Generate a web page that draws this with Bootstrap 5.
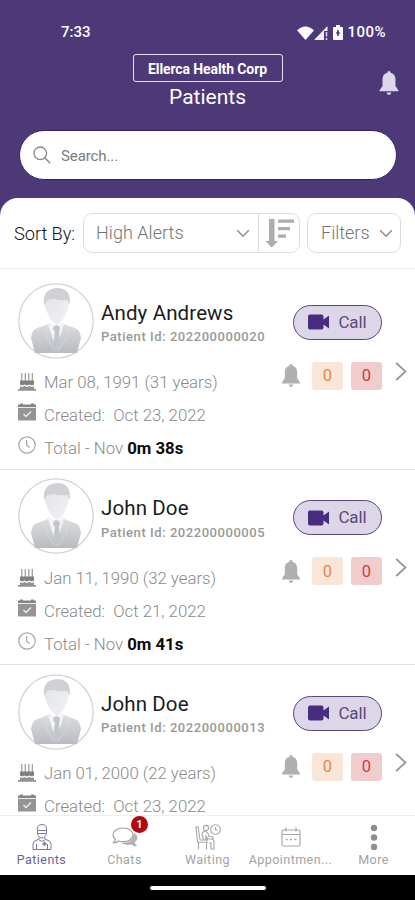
<!DOCTYPE html>
<html lang="en">
<head>
<meta charset="utf-8">
<meta name="viewport" content="width=device-width, initial-scale=1">
<title>Patients</title>
<link href="https://cdn.jsdelivr.net/npm/bootstrap@5.3.0/dist/css/bootstrap.min.css" rel="stylesheet">
<style>
  body { font-family: Roboto, "Liberation Sans", sans-serif; line-height: 1; color: #222; }
  .phone { width: 415px; height: 900px; background: #4d3978; white-space: nowrap; }
  .phone svg { display: block; flex: none; }
  .status { height: 54px; padding: 11px 29px 0 61px; font-size: 15px; font-weight: 500; }
  .battery-text { letter-spacing: .5px; }
  .title-area { height: 76px; }
  .org { width: 150px; height: 28px; border: 1.5px solid #e6e0f2; border-radius: 3px; font-size: 14px; font-weight: 700; letter-spacing: -.1px; padding-top: 2px; }
  .page-title { font-size: 21px; font-weight: 400; letter-spacing: 0; margin-top: 3px; }
  .head-bell { right: 16px; top: 17px; color: #ddd7ec; }
  .search { height: 50px; margin: 0 18px 0 19px; padding-left: 13px; border: 1px solid #39206c; font-size: 15px; color: #7c7c7c; }
  .search span { margin: 2px 0 0 10px; letter-spacing: -.1px; }
  .sheet { margin-top: 18px; border-radius: 18px 18px 0 0; min-height: 0; }
  .sortbar { height: 71px; padding: 0 14px; border-bottom: 1px solid #ededed; }
  .sort-label { width: 69px; padding-top: 2px; font-size: 18.3px; letter-spacing: -.1px; font-weight: 300; color: #111; }
  .box { height: 40px; border: 1px solid #dedede; border-radius: 9px; font-size: 18px; color: #747474; font-weight: 300; }
  .box-sort { width: 217px; }
  .box-main { width: 175px; padding: 0 8px 0 12px; border-right: 1px solid #dedede; letter-spacing: .05px; }
  .box-filter { width: 94px; margin-left: 7px; padding: 0 7px 0 13px; }
  .patient-list { padding-top: 5px; }
  .patient { height: 195.5px; padding: 8.5px 8px 0 18px; border-bottom: 1.5px solid #e2e2e2; }
  .patient-name { font-size: 20.5px; letter-spacing: .12px; color: #1c1c1c; }
  .patient-id { font-size: 13px; font-weight: 500; color: #999; letter-spacing: .55px; margin-top: 7px; }
  .who { height: 76px; }
  .who-text { padding: 5px 0 0 7px; }
  .facts { margin-top: 7px; color: #8a8a8a; font-size: 16.8px; font-weight: 300; }
  .facts li { height: 33px; }
  .facts li span { padding-top: 1px; }
  .facts svg { margin-right: 8px; }
  .facts .raised { margin-bottom: 6px; }
  .facts b { color: #0c0c0c; font-weight: 700; }
  .actions { width: 125px; padding-top: 22px; }
  .call { width: 89px; height: 35px; margin-left: 11px; padding: 0; gap: 8px; background: #dcd6e8; border: 1px solid #594780; color: #594a78; font-size: 17px; line-height: 1; letter-spacing: -.1px; }
  .counts { margin-top: 22px; height: 28px; }
  .count { width: 31px; height: 28px; padding-top: 2px; border-radius: 3px; font-size: 16.5px; }
  .count-warm { background: #f9e6d7; color: #e3864a; margin-left: 12px; }
  .count-alert { background: #f0cccd; color: #cf3b45; margin-left: 8px; }
  .tabs { height: 60px; border-top: 1px solid #eeeeee; color: #a3a3a3; font-size: 12.5px; letter-spacing: .45px; }
  .tab { width: 83px; height: 59px; padding-top: 6px; }
  .tab .glyph { height: 32px; padding-bottom: 2px; }
  .tab-on { color: #71628f; }
  .unread { width: 17px; height: 17px; left: 48px; top: 0; background: #ad0a12; font-size: 11px; font-weight: 700; letter-spacing: 0; }
  .homebar { height: 25px; }
  .homebar span { width: 116px; height: 4px; }
</style>
</head>
<body>
<svg width="0" height="0" class="position-absolute" aria-hidden="true">
  <defs>
    <linearGradient id="suit" x1="0" y1="0" x2="0" y2="1"><stop offset="0" stop-color="#dcdde0"/><stop offset="1" stop-color="#b9bbc0"/></linearGradient>
    <linearGradient id="face" x1="0" y1="0" x2="1" y2="1"><stop offset="0" stop-color="#e2e4ea"/><stop offset="1" stop-color="#f1f1f5"/></linearGradient>
    <symbol id="avatar" viewBox="0 0 76 76">
      <circle cx="38" cy="38" r="37.2" fill="#fff" stroke="#d3d3d3" stroke-width="1.300"/>
      <path d="M31 39 38 44 45 39 49 44 46 69H30L27 44Z" fill="#f2f3f5"/>
      <path d="M27 14q11-8 23 0 2 6-1 14-4 11-10 14-6-3-10-13-4-9-2-15Z" fill="url(#face)"/>
      <path d="M26 22q-2-16 13-17 15 0 12.500 17l-2-5q-8 1-13-1-6 0-8 2Z" fill="#cfd1d5"/>
      <path d="M30 41 17 46q-3 2-4 9l4 15h42l4-15q-1-7-4-9L46 41l-8 25Z" fill="url(#suit)"/>
      <path d="m36 43 2-1 3 1 1 3-1 3 1 13-3 7-4-7 2-13-2-3Z" fill="#c3c5cc"/>
      <path d="m30 42-4 6 3 3-1 3 9 14m10-26 4 6-3 3 1 3-9 14" fill="none" stroke="#dfe0e3" stroke-width=".6"/>
    </symbol>
    <symbol id="bell" viewBox="0 0 18 23">
      <path fill="currentColor" d="M9 0c1 0 1.500.7 1.500 1.700C14 2.500 15.200 5.200 15.200 8.500v5.800l2.800 4.200v1H0v-1l2.800-4.200V8.500c0-3.300 1.200-6 4.700-6.800C7.500.7 8 0 9 0ZM6.800 20.500h4.400C11 22 10.200 22.800 9 22.800S7 22 6.800 20.500Z"/>
    </symbol>
    <symbol id="down" viewBox="0 0 14 9"><path d="m1.200 1.200 5.800 6 5.800-6" fill="none" stroke="#8c8c8c" stroke-width="1.500"/></symbol>
    <symbol id="cake" viewBox="0 0 18 18">
      <path d="M3.800 0v8M7.300 0v8M10.800 0v8M14.300 0v8" stroke="#a0a0a0" stroke-width="1.300"/>
      <path d="M2 7.500h14v4l-2 1-2.500-1-2.500 1-2.500-1-2.500 1-2-1Z" fill="#7f7f7f"/>
      <path d="M2 13.200l2 .8 2.500-1 2.500 1 2.500-1 2.500 1 2-.8V16h2v1.700H0V16H2Z" fill="#929292"/>
    </symbol>
    <symbol id="cal" viewBox="0 0 18 18">
      <path d="M0 1.500h2V.5h3v1h8v-1h3v1h2V4H0Z" fill="#858585"/><path d="M0 4.800h18V17.500H0Z" fill="#949494"/>
      <path d="m5.500 11 2.500 2.400L13 8.500" fill="none" stroke="#eee" stroke-width="1.400"/>
    </symbol>
    <symbol id="clock" viewBox="0 0 18 18"><circle cx="9" cy="9" r="8.200" fill="none" stroke="#a5a5a5" stroke-width="1.200"/><path d="M8.700 4v5.500l3 2" fill="none" stroke="#a5a5a5" stroke-width="1.200"/></symbol>
    <symbol id="video" viewBox="0 0 22 16"><path d="M2 .5h11.500a2 2 0 0 1 2 2v3L21 1.500v13l-5.500-4v3a2 2 0 0 1-2 2H2a2 2 0 0 1-2-2v-11a2 2 0 0 1 2-2Z" fill="#472c80"/></symbol>
    <symbol id="next" viewBox="0 0 12 19"><path d="m1.200 1 9.300 8.500-9.300 8.500" fill="none" stroke="#969696" stroke-width="1.700"/></symbol>
  </defs>
</svg>

<div class="phone d-flex flex-column overflow-hidden">
  <header class="text-white">
    <div class="status d-flex align-items-center justify-content-between">
      <span>7:33</span>
      <div class="d-flex align-items-center">
        <svg width="17" height="14" viewBox="0 0 17 14"><path d="M0 4.200Q8.500-3.400 17 4.200L8.500 14Z" fill="#fff"/></svg>
        <svg width="15" height="14" viewBox="0 0 15 14"><path d="M0 14 13.500 0v5H10v9Z" fill="#f1edf9"/><path d="M12.500 6v4.500m0 1.500v2" stroke="#ddd6ec" stroke-width="1.500"/></svg>
        <svg class="ms-1 me-1" width="10" height="15" viewBox="0 0 10 15"><path d="M1 2h2V0h4v2h2q1 0 1 1v11q0 1-1 1H1q-1 0-1-1V3q0-1 1-1Z" fill="#fff"/><path d="M5 5v6M3.200 8h3.600" stroke="#4d3978" stroke-width="1.600"/></svg>
        <span class="battery-text">100%</span>
      </div>
    </div>
    <div class="title-area position-relative d-flex flex-column align-items-center">
      <div class="org d-flex align-items-center justify-content-center">Ellerca Health Corp</div>
      <h1 class="page-title mb-0">Patients</h1>
      <svg class="head-bell position-absolute" width="20" height="24"><use href="#bell"/></svg>
    </div>
    <div class="search rounded-pill bg-white d-flex align-items-center">
      <svg width="18" height="18" viewBox="0 0 18 18"><circle cx="7.300" cy="7.300" r="6.300" fill="none" stroke="#8a8a8a" stroke-width="1.300"/><path d="m11.800 11.800 5.400 5.400" stroke="#8a8a8a" stroke-width="1.500"/></svg>
      <span>Search...</span>
    </div>
  </header>

  <main class="sheet bg-white flex-grow-1 overflow-hidden">
    <div class="sortbar d-flex align-items-center">
      <div class="sort-label">Sort By:</div>
      <div class="box box-sort d-flex align-items-stretch">
        <div class="box-main d-flex align-items-center justify-content-between">High Alerts <svg width="14" height="9"><use href="#down"/></svg></div>
        <div class="flex-grow-1 d-flex align-items-center justify-content-center">
          <svg width="29" height="30" viewBox="0 0 29 30" fill="#adadad"><path d="M4 1h5.500v22H13l-6.200 6.500L.5 23H4ZM13 1.500h16v3.300H13Zm0 7.500h12v3.300H13Zm0 7.500h8v3.300h-8Z"/></svg>
        </div>
      </div>
      <div class="box box-filter d-flex align-items-center justify-content-between">Filters <svg width="14" height="9"><use href="#down"/></svg></div>
    </div>

    <div class="patient-list">
    <article class="patient d-flex justify-content-between">
      <div>
        <div class="who d-flex align-items-center">
          <svg width="76" height="76"><use href="#avatar"/></svg>
          <div class="who-text"><div class="patient-name">Andy Andrews</div><div class="patient-id">Patient Id: 202200000020</div></div>
        </div>
        <ul class="facts list-unstyled mb-0">
          <li class="d-flex align-items-center"><svg width="18" height="18"><use href="#cake"/></svg><span>Mar 08, 1991 (31 years)</span></li>
          <li class="d-flex align-items-center"><svg class="raised" width="18" height="18"><use href="#cal"/></svg><span>Created:&nbsp; Oct 23, 2022</span></li>
          <li class="d-flex align-items-center"><svg class="raised" width="18" height="18"><use href="#clock"/></svg><span>Total - Nov <b>0m 38s</b></span></li>
        </ul>
      </div>
      <div class="actions">
        <button type="button" class="btn call rounded-pill d-flex align-items-center justify-content-center"><svg width="22" height="16"><use href="#video"/></svg>Call</button>
        <div class="counts d-flex align-items-center">
          <svg width="18" height="23" color="#b0b0b0"><use href="#bell"/></svg>
          <span class="count count-warm d-flex align-items-center justify-content-center">0</span>
          <span class="count count-alert d-flex align-items-center justify-content-center">0</span>
          <svg class="ms-auto mb-2" width="12" height="19"><use href="#next"/></svg>
        </div>
      </div>
    </article>

    <article class="patient d-flex justify-content-between">
      <div>
        <div class="who d-flex align-items-center">
          <svg width="76" height="76"><use href="#avatar"/></svg>
          <div class="who-text"><div class="patient-name">John Doe</div><div class="patient-id">Patient Id: 202200000005</div></div>
        </div>
        <ul class="facts list-unstyled mb-0">
          <li class="d-flex align-items-center"><svg width="18" height="18"><use href="#cake"/></svg><span>Jan 11, 1990 (32 years)</span></li>
          <li class="d-flex align-items-center"><svg class="raised" width="18" height="18"><use href="#cal"/></svg><span>Created:&nbsp; Oct 21, 2022</span></li>
          <li class="d-flex align-items-center"><svg class="raised" width="18" height="18"><use href="#clock"/></svg><span>Total - Nov <b>0m 41s</b></span></li>
        </ul>
      </div>
      <div class="actions">
        <button type="button" class="btn call rounded-pill d-flex align-items-center justify-content-center"><svg width="22" height="16"><use href="#video"/></svg>Call</button>
        <div class="counts d-flex align-items-center">
          <svg width="18" height="23" color="#b0b0b0"><use href="#bell"/></svg>
          <span class="count count-warm d-flex align-items-center justify-content-center">0</span>
          <span class="count count-alert d-flex align-items-center justify-content-center">0</span>
          <svg class="ms-auto mb-2" width="12" height="19"><use href="#next"/></svg>
        </div>
      </div>
    </article>

    <article class="patient d-flex justify-content-between">
      <div>
        <div class="who d-flex align-items-center">
          <svg width="76" height="76"><use href="#avatar"/></svg>
          <div class="who-text"><div class="patient-name">John Doe</div><div class="patient-id">Patient Id: 202200000013</div></div>
        </div>
        <ul class="facts list-unstyled mb-0">
          <li class="d-flex align-items-center"><svg width="18" height="18"><use href="#cake"/></svg><span>Jan 01, 2000 (22 years)</span></li>
          <li class="d-flex align-items-center"><svg class="raised" width="18" height="18"><use href="#cal"/></svg><span>Created:&nbsp; Oct 23, 2022</span></li>
        </ul>
      </div>
      <div class="actions">
        <button type="button" class="btn call rounded-pill d-flex align-items-center justify-content-center"><svg width="22" height="16"><use href="#video"/></svg>Call</button>
        <div class="counts d-flex align-items-center">
          <svg width="18" height="23" color="#b0b0b0"><use href="#bell"/></svg>
          <span class="count count-warm d-flex align-items-center justify-content-center">0</span>
          <span class="count count-alert d-flex align-items-center justify-content-center">0</span>
          <svg class="ms-auto mb-2" width="12" height="19"><use href="#next"/></svg>
        </div>
      </div>
    </article>
    </div>
  </main>

  <nav class="tabs bg-white d-flex flex-shrink-0">
    <div class="tab tab-on d-flex flex-column align-items-center">
      <div class="glyph d-flex align-items-center"><svg width="20" height="28" viewBox="0 0 20 28" fill="none" stroke="#8376a0"><path d="M5.500 6q0-4.500 4.500-4.500T14.500 6v1.500h-9ZM5.500 7.500v3q1 4.500 4.500 4.500t4.500-4.500v-3M6 10.500h8M7.500 14.500q0 2-2.500 2.500-4 .7-4 4v5.500h18V21q0-3.300-4-4-2.500-.5-2.500-2.500M7 16.800l3 1.700 3-1.700M4.500 21v5.500m11-5.500v5.500"/><path d="M12.500 18.800v4M10.500 20.800h4" stroke-width="1.700"/></svg></div>
      <span>Patients</span>
    </div>
    <div class="tab position-relative d-flex flex-column align-items-center">
      <div class="glyph d-flex align-items-center"><svg width="26" height="21" viewBox="0 0 26 21" fill="none" stroke="#a0a0a0" stroke-width="1.200"><path d="M11 1C5 1 1 4 1 8q0 2.500 2.500 4.500-.3 2-2 3.200 3 .3 5-1.700 2 .7 4.500.7c6 0 10-3 10-6.700S17 1 11 1Z"/><path d="M22.300 6.500q2.800 2 2.500 4.800-.3 2.400-2.500 3.900.3 2.300 2.200 3.800-3 0-5.200-2-4.500 1.200-8.800-.7 11.500 0 11.800-9.800Z" fill="#b5b5b5" stroke-width=".8"/></svg></div>
      <span>Chats</span>
      <span class="unread position-absolute rounded-circle text-white d-flex align-items-center justify-content-center">1</span>
    </div>
    <div class="tab d-flex flex-column align-items-center">
      <div class="glyph d-flex align-items-center"><svg width="26" height="26" viewBox="0 0 26 26" fill="none" stroke="#a6a6a6" stroke-width="1.100"><circle cx="20.500" cy="5.500" r="4.800"/><path d="M20.500 3v3h2"/><circle cx="11" cy="4" r="2.600"/><path d="M1 3h2.200L5 16h7v2.200H2.500ZM3.500 18v7.500M11.500 18v7.500M7.500 8q4-1.500 5.500 1.500l1 3 4 .5v2h-5l-2-3v3h5q3 0 3 3V25h-3v-6h-2M7.500 8 7 10l1.500 5.500"/></svg></div>
      <span>Waiting</span>
    </div>
    <div class="tab d-flex flex-column align-items-center">
      <div class="glyph d-flex align-items-center"><svg width="20" height="20" viewBox="0 0 20 20" fill="none" stroke="#a8a8a8" stroke-width="1.200"><path d="M2.500 3h15Q19 3 19 4.500v13q0 1.500-1.500 1.500h-15Q1 19 1 17.500v-13Q1 3 2.500 3ZM1 7.500h18M5 .5v4M15 .5v4"/><path d="M4.500 12.500h2.200m2.200 0h2.200m2.200 0h2.200" stroke-width="1.600"/></svg></div>
      <span>Appointmen...</span>
    </div>
    <div class="tab d-flex flex-column align-items-center">
      <div class="glyph d-flex align-items-center"><svg width="8" height="27" viewBox="0 0 8 27" fill="#8e8e8e"><circle cx="4" cy="4" r="3.200"/><circle cx="4" cy="13.500" r="3.200"/><circle cx="4" cy="23" r="3.200"/></svg></div>
      <span>More</span>
    </div>
  </nav>
  <div class="homebar bg-black d-flex align-items-center justify-content-center flex-shrink-0"><span class="bg-white rounded-pill"></span></div>
</div>
<script src="https://cdn.jsdelivr.net/npm/bootstrap@5.3.0/dist/js/bootstrap.bundle.min.js"></script>
</body>
</html>
